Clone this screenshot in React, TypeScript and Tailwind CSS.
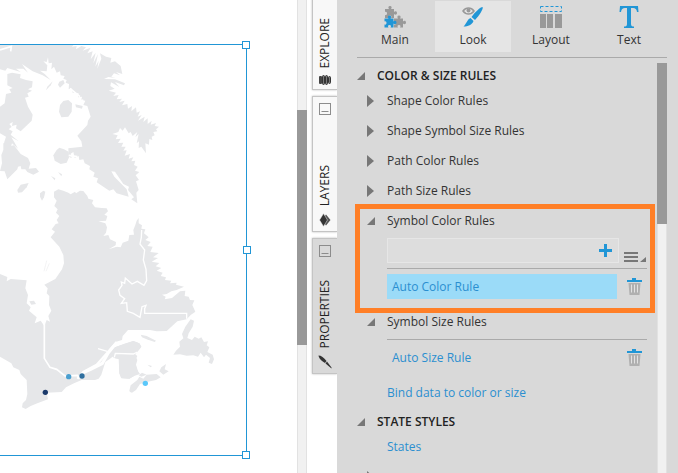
import type { ReactNode } from "react";

const mainland =
  "162,-115 175,-122 190,-118 205,-112 212,-107 225,-115 228,-110 240,-118 250,-117 262,-102 265,-94 280,-90 276,-80 285,-68 305,-66 320,-65 324,-56 313,-46 322,-42 318,-28 295,-26 316,-20 321,-8 318,8 310,18 325,15 330,28 348,36 347,46 326,58 350,50 362,52 368,38 385,32 388,15 402,14 400,0 406,-15 410,-28 416,-36 416,-20 426,-14 424,-4 436,-2 432,10 446,22 436,30 452,36 442,48 458,50 451,66 476,69 459,82 474,84 455,95 478,99 467,109 484,114 470,122 488,128 482,138 498,142 495,150 514,152 510,160 530,158 528,164 552,170 530,180 514,184 500,192 486,194 497,200 494,208 516,204 540,184 556,182 554,198 566,200 570,210 583,211 577,225 586,245 572,255 560,268 532,274 500,303 470,304 450,300 384,300 368,318 366,330 346,336 324,362 304,396 275,410 248,428 250,433 274,422 310,404 328,372 345,352 372,342 400,333 418,340 424,350 412,365 385,366 365,370 347,370 343,384 356,386 358,430 364,445 388,446 402,438 420,432 410,418 405,392 412,378 400,368 372,372 348,372 330,386 316,396 304,434 296,446 285,450 245,450 222,460 198,472 185,486 140,488 144,508 112,520 92,528 77,537 66,532 68,520 78,510 82,492 80,450 62,432 58,420 40,412 34,400 0,380 0,132 22,141 20,154 32,147 80,151 76,175 84,195 80,220 92,232 87,242 110,262 104,280 122,272 133,288 140,270 150,275 145,258 154,242 147,225 148,198 140,190 143,175 133,164 166,147 186,118 192,100 190,75 178,50 152,22 165,5 155,-2 167,-18 176,-20 170,-30 178,-42 168,-52 173,-62 163,-72 170,-88 162,-98";

const gaspe = "345,352 372,342 400,333 418,340 424,350 412,365 405,374 412,390 408,404 414,424 402,438 388,446 364,444 358,430 357,388 342,384 330,372";

const baffin =
  "0,132 222,132 216,140 230,138 228,148 244,138 258,142 248,152 272,143 262,160 278,154 272,178 287,158 280,190 294,162 286,200 296,182 292,206 304,176 300,160 318,170 334,174 331,188 345,184 362,198 367,222 348,216 360,226 342,220 334,230 346,234 325,231 312,237 345,238 375,250 372,256 345,246 358,261 333,247 331,258 344,266 326,272 348,278 340,288 356,285 350,298 366,296 358,306 374,302 366,316 382,312 384,326 396,318 394,334 408,322 410,338 420,334 413,350 425,345 414,362 434,350 430,366 443,355 443,372 455,362 452,374 468,369 464,378 477,380 468,388 472,394 460,396 464,406 455,410 457,420 448,417 447,434 436,430 438,460 424,440 416,444 417,424 410,430 416,402 406,412 412,396 398,408 392,396 386,400 375,382 368,392 360,384 355,396 337,402 353,406 347,418 362,416 354,429 370,428 364,440 377,440 370,452 380,451 374,467 390,462 386,476 400,472 394,484 406,482 402,495 413,500 405,512 418,516 407,526 417,540 408,544 416,570 409,578 412,610 394,598 402,592 384,570 387,560 370,552 345,515 334,514 343,530 380,568 386,590 350,580 340,568 328,572 290,547 294,535 280,530 284,518 268,508 270,498 254,490 250,478 238,480 236,468 224,474 220,456 212,461 215,474 206,470 205,445 247,440 244,424 232,407 262,375 264,362 272,350 262,318 250,315 256,302 244,300 246,290 234,292 236,280 218,278 214,265 206,268 207,252 197,248 200,240 190,236 194,228 182,226 180,214 170,218 162,200 154,208 156,188 146,190 144,172 140,186 130,184 142,196 140,214 120,212 134,222 152,240 128,226 98,214 66,192 84,218 70,206 48,206 62,216 22,204 16,212 0,208";

const northShapes = [
  "22,222 36,218 62,223 60,234 78,240 98,244 96,262 84,268 96,272 82,280 86,290 75,293 84,320 98,344 95,362 62,394 48,385 50,374 36,378 38,366 28,372 35,380 26,388 38,394 32,404 56,424 34,412 44,428 54,446 36,430 30,448 24,432 12,428 18,410 0,400 0,320 14,310 18,282 34,278 28,268 38,264 22,256",
  "10,430 24,426 30,438 42,436 62,462 84,474 91,490 86,506 108,504 117,515 100,524 82,516 76,508 64,508 62,498 54,500 52,508 22,538 14,514 0,513 6,490 4,465 10,450",
  "190,303 205,300 216,310 215,335 205,350 184,352 177,335 180,315",
  "160,466 170,450 178,443 192,448 206,455 208,470 200,488 182,492 164,482",
  "52,570 62,554 86,549 80,562 66,577 54,578",
  "120,580 130,572 136,575 132,592 126,602 120,590",
  "226,313 248,318 246,326 228,322",
  "158,244 152,256 138,271 142,260",
  "178,245 190,240 194,250 180,263 174,254",
  "153,528 166,535 164,541",
  "174,516 186,523 184,529",
];

const southShapes = [
  "572,268 582,272 578,290 566,310 562,324 576,330 584,320 596,326 604,322 612,336 624,334 620,346 628,352 622,366 638,374 642,388 636,402 626,398 630,384 618,374 612,382 602,368 594,380 580,376 560,377 540,373 520,374 528,362 540,350 538,335 550,325 546,312 556,290",
  "388,482 392,466 412,450 418,440 430,446 440,434 470,432 482,442 468,450 440,456 420,462 408,480 396,488 390,486",
  "478,424 484,412 498,402 494,418 506,424 490,434",
  "422,314 440,318 468,332 464,336 440,328 426,322",
  "88,214 102,212 108,222 94,224",
  "416,436 426,428 440,434 424,440",
  "442,404 456,408 452,412",
];

const cities = [
  { x: 136, y: 487, color: "#1b3a6b" },
  { x: 206, y: 440, color: "#4a9fd0" },
  { x: 246, y: 438, color: "#2f6f9f" },
  { x: 436, y: 460, color: "#5bc8fa" },
];

function CanadaMap() {
  return (
    <svg viewBox="0 135 738 1230" className="block h-[410px] w-[246px]" role="img" aria-label="Map">
      <g fill="#e6e7e9">
        <polygon points={baffin} />
        {northShapes.map((p) => (
          <polygon key={p} points={p} />
        ))}
      </g>
      <path
        d="M0 150 34 139 32 154M240 290 l-30 -25 M250 300 l-24 6 M206 466 l26 4 M160 210 l10 30 l-12 -4"
        stroke="#fff"
        strokeWidth="5"
        fill="none"
      />
      <g transform="translate(0 690)">
        <polygon points={mainland} fill="#e6e7e9" />
        <polygon points={gaspe} fill="#e6e7e9" />
        {southShapes.map((p) => (
          <polygon key={p} points={p} fill="#e6e7e9" />
        ))}
        <g fill="none" stroke="#fff" strokeWidth="4">
          <path d="M133 280V385L150 412 170 418 195 438 232 436 238 446" strokeWidth="5" />
          <path d="M232 446 250 426 290 404 322 368 350 336" strokeWidth="7" />
          <path d="M294 356 322 364M348 50 362 22M343 382 346 370 400 372 412 366" />
          <path d="M425 0 424 22 420 42 434 60 430 90 438 118 440 152 432 166 412 154 396 162 376 144 374 160 364 156 366 166 356 180 360 196 374 206 364 220 380 218 382 244 400 250 420 262 426 230 438 226 434 236 434 250H560V266" />
          <path d="M140 92l-8 32M148 100l-10 24" stroke="#ededee" strokeWidth="2" />
        </g>
        {cities.map((c) => (
          <circle key={c.x} cx={c.x} cy={c.y} r="8" fill={c.color} />
        ))}
      </g>
    </svg>
  );
}

function Handle({ place }: { place: string }) {
  return <span className={`absolute size-2 border border-[#2196d6] bg-white ${place}`} />;
}

function Canvas() {
  return (
    <main className="min-w-0 flex-1 pt-11">
      <div className="relative h-[412px] w-[247px] border-y border-r border-[#2196d6]">
        <CanadaMap />
        <Handle place="-top-1 -right-1" />
        <Handle place="top-[201px] -right-[5px]" />
        <Handle place="-bottom-1 -right-1" />
      </div>
    </main>
  );
}

function PinIcon() {
  return (
    <svg width="12" height="12" viewBox="0 0 12 12" fill="none" aria-hidden="true">
      <rect x="0.5" y="0.5" width="11" height="11" stroke="#8c8c8c" />
      <path d="M2.5 8.5H9.5" stroke="#8c8c8c" />
    </svg>
  );
}

function SideTab({ label, icon, size, active }: { label: string; icon: ReactNode; size: string; active?: boolean }) {
  return (
    <button
      className={`flex w-[25px] flex-col items-center border border-r-0 border-[#c4c4c4] pt-[6px] pb-1 shadow-[0_0_2px_#bbb] ${size} ${
        active ? "bg-[#d9d9d9]" : "bg-[#f8f8f8]"
      }`}
    >
      <PinIcon />
      <span className="mt-auto mb-[7px] rotate-180 text-xs leading-4 text-[#222] [writing-mode:vertical-rl]">{label}</span>
      {icon}
    </button>
  );
}

function ExploreIcon() {
  return (
    <svg width="12" height="10" viewBox="0 0 12 10" aria-hidden="true">
      <rect width="3" height="8" y="1" rx="1" fill="#444" />
      <g fill="#777" stroke="#333">
        <rect x="3.5" y="0.5" width="2" height="9" rx="1" />
        <rect x="6.5" y="0.5" width="2" height="9" rx="1" />
        <rect x="9.5" y="1.5" width="2" height="7" rx="1" />
      </g>
    </svg>
  );
}

function LayersIcon() {
  return (
    <svg width="12" height="14" viewBox="0 0 12 14" aria-hidden="true">
      <path d="M7 1.5 11.5 7 7 12.5 5 10 7 7 5 4Z" fill="#555" />
      <path d="M4.5 .5 8.5 7 4.5 13.5 .5 7Z" fill="#333" stroke="#f8f8f8" strokeWidth=".5" />
    </svg>
  );
}

function BrushDarkIcon() {
  return (
    <svg width="14" height="14" viewBox="0 0 14 14" aria-hidden="true">
      <path d="M.5 .5C3 .5 6 2.500 8.500 6L7 8C4 6 1 4 .5 .5Z M9 6.500 13.500 12.500V13.500L7.500 8.500Z" fill="#333" />
    </svg>
  );
}

const puzzlePiece =
  "M5 3C4 2 4 0 6 0C8 0 8 2 7 3H10V6C11 5 13 5 13 7C13 9 11 9 10 8V12H7C8 10.500 7.500 9.500 6 9.500C4.500 9.500 4 10.500 5 12H1V9C2.500 9.500 3 8.500 3 7.500C3 6.500 2.500 5.500 1 6V3Z";

function MainIcon() {
  return (
    <svg width="22" height="22" viewBox="0 0 22 22" aria-hidden="true">
      <path d={puzzlePiece} fill="#999" />
      <path d={puzzlePiece} fill="#999" transform="translate(9 9.500)" />
      <path d={puzzlePiece} fill="#2196d6" transform="translate(-.5 9.500)" />
    </svg>
  );
}

function LookIcon() {
  return (
    <svg width="22" height="22" viewBox="0 0 22 22" aria-hidden="true">
      <path d="M1 5C4 1 9 1 12 5C9 9 4 9 1 5Z" fill="none" stroke="#999" strokeWidth="1.500" />
      <circle cx="6.500" cy="4.500" r="2" fill="#999" />
      <path d="M20.500 1C22 2 17 10 13 14L9.500 11C13 6 18.500 1 20.500 1Z M8.500 12 11.500 15C10 19 6 20.500 1.500 20.500C4.500 18 5 13.500 8.500 12Z" fill="#2196d6" />
    </svg>
  );
}

function LayoutIcon() {
  return (
    <svg width="22" height="22" viewBox="0 0 22 22" aria-hidden="true">
      <rect x="0.5" y="0.5" width="21" height="5" fill="none" stroke="#2196d6" strokeDasharray="3 2" />
      <path d="M0 8H6V22H0ZM7 8H13V22H7ZM15 8H22V22H15Z" fill="#999" />
    </svg>
  );
}

function TextIcon() {
  return (
    <svg width="20" height="22" viewBox="0 0 20 22" aria-hidden="true">
      <path d="M1 0H19L19.500 6H18C17.500 3 16.500 2 14 2H12V18C12 20 13 20.500 15 20.500V22H5V20.500C7 20.500 8 20 8 18V2H6C3.500 2 2.500 3 2 6H.5Z" fill="#2196d6" />
    </svg>
  );
}

function PanelTab({ label, icon, active }: { label: string; icon: ReactNode; active?: boolean }) {
  return (
    <button className={`flex h-[51px] flex-1 flex-col items-center gap-1 pt-[5px] ${active ? "bg-[#e5e5e5]" : ""}`}>
      {icon}
      <span className="text-xs leading-4">{label}</span>
    </button>
  );
}

function OpenArrow() {
  return (
    <svg width="8" height="8" viewBox="0 0 8 8" aria-hidden="true">
      <path d="M8 0V8H0Z" fill="#777" />
    </svg>
  );
}

function ClosedArrow() {
  return (
    <svg width="8" height="12" viewBox="0 0 8 12" aria-hidden="true">
      <path d="M0 0 7 6 0 12Z" fill="#777" />
    </svg>
  );
}

function Section({ title }: { title: string }) {
  return (
    <button className="flex h-5 w-full items-center gap-3 text-xs font-semibold text-[#222]">
      <OpenArrow />
      {title}
    </button>
  );
}

function Row({ title, open }: { title?: string; open?: boolean }) {
  return (
    <button className="flex h-[30px] w-full items-center gap-3 pl-[10px] text-xs">
      {open ? <OpenArrow /> : <ClosedArrow />}
      {title}
    </button>
  );
}

function TrashButton({ label }: { label: string }) {
  return (
    <button aria-label={label}>
      <svg width="15" height="18" viewBox="0 0 15 18" aria-hidden="true">
        <path d="M0 2H5V0H9V2H15V4H0Z" fill="#2196d6" />
        <path d="M1.500 5H13.500L12.500 17H2.500Z" fill="#b0b0b0" />
        <path d="M4.500 6.500V14.500M7.500 6.500V14.500M10.500 6.500V14.500" stroke="#e2e2e2" />
      </svg>
    </button>
  );
}

function Rule({ name, selected }: { name: string; selected?: boolean }) {
  return (
    <div className="mr-[10px] ml-[30px] border-t border-[#aaa] pt-[5px] pb-2">
      <div className="flex items-center gap-[10px] pr-[5px]">
        <button className={`h-[25px] flex-1 px-[5px] text-left text-xs text-[#2b8fd0] ${selected ? "bg-[#9bdbf8]" : ""}`}>
          {name}
        </button>
        <TrashButton label={`Delete ${name}`} />
      </div>
    </div>
  );
}

function AddRule() {
  return (
    <div className="mt-[2px] mr-[10px] mb-[5px] ml-[30px] flex items-end gap-[5px]">
      <div className="flex h-[25px] min-w-0 flex-1 items-center border border-[#e6e6e6] bg-[#dddddd] pr-[6px]">
        <input aria-label="New color rule" className="h-full min-w-0 flex-1 bg-transparent px-1 text-xs outline-none" />
        <button aria-label="Add rule">
          <svg width="13" height="13" viewBox="0 0 13 13" aria-hidden="true">
            <path d="M5 0H8V5H13V8H8V13H5V8H0V5H5Z" fill="#2196d6" />
          </svg>
        </button>
      </div>
      <button aria-label="Rule options">
        <svg width="23" height="11" viewBox="0 0 23 11" aria-hidden="true">
          <path d="M0 0H14V2H0ZM0 4H14V6H0ZM0 8H14V10H0Z M22 5V10H16Z" fill="#777" />
        </svg>
      </button>
    </div>
  );
}

export default function App() {
  return (
    <div className="flex h-screen overflow-hidden bg-white font-['Open_Sans','Noto_Sans',sans-serif] text-[#333]">
      <Canvas />
      <div className="w-[10px] shrink-0 border-x border-[#e2e2e2] bg-[#f1f1f1] pt-[110px]">
        <div className="-mx-px h-[235px] bg-[#999]" />
      </div>
      <nav className="ml-[5px] flex w-[25px] shrink-0 flex-col gap-[6px]">
        <SideTab label="EXPLORE" icon={<ExploreIcon />} size="-mt-[46px] h-[136px]" />
        <SideTab label="LAYERS" icon={<LayersIcon />} size="h-[136px]" />
        <SideTab label="PROPERTIES" icon={<BrushDarkIcon />} size="h-[136px]" active />
      </nav>
      <aside className="flex w-[341px] shrink-0 flex-col bg-[#d9d9d9] pr-[11px]">
        <div className="ml-5 flex gap-[2px] border-b border-[#aaa] pt-px pb-[5px]">
          <PanelTab label="Main" icon={<MainIcon />} />
          <PanelTab label="Look" icon={<LookIcon />} active />
          <PanelTab label="Layout" icon={<LayoutIcon />} />
          <PanelTab label="Text" icon={<TextIcon />} />
        </div>
        <div className="mt-[5px] flex min-h-0 flex-1">
          <div className="min-w-0 flex-1 overflow-hidden pt-[3px] pl-5">
            <Section title="COLOR & SIZE RULES" />
            <Row title="Shape Color Rules" />
            <Row title="Shape Symbol Size Rules" />
            <Row title="Path Color Rules" />
            <Row title="Path Size Rules" />
            <div className="relative">
              <Row title="Symbol Color Rules" open />
              <AddRule />
              <Rule name="Auto Color Rule" selected />
              <div className="pointer-events-none absolute -top-[2px] right-[2px] -bottom-[6px] -left-[2px] border-[5px] border-[#ff7f27]" />
            </div>
            <Row title="Symbol Size Rules" open />
            <div className="pt-[2px]">
              <Rule name="Auto Size Rule" />
            </div>
            <a href="#bind" className="ml-[30px] flex h-[30px] items-center text-xs text-[#2b8fd0]">
              Bind data to color or size
            </a>
            <div className="mt-1">
              <Section title="STATE STYLES" />
            </div>
            <a href="#states" className="ml-[30px] flex h-[30px] items-center text-xs text-[#2b8fd0]">
              States
            </a>
            <Row />
          </div>
          <div className="w-[10px] border-x border-[#e2e2e2] bg-[#f1f1f1]">
            <div className="-mx-px h-[161px] bg-[#999]" />
          </div>
        </div>
      </aside>
    </div>
  );
}
